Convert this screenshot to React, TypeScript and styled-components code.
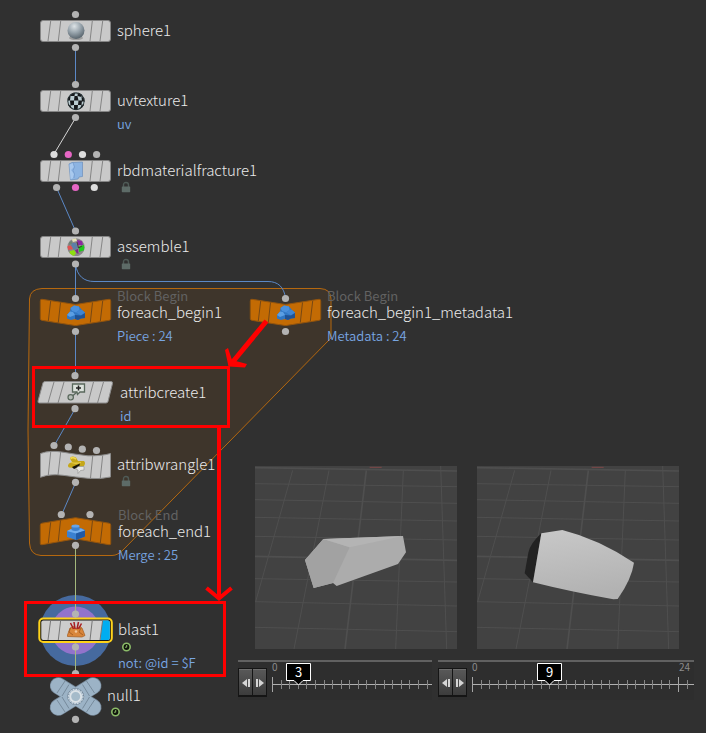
import React, { useState } from "react";
import styled, { createGlobalStyle } from "styled-components";

const GlobalStyle = createGlobalStyle`
  *, *::before, *::after { box-sizing: border-box; }
  body {
    margin: 0;
    background: #303030;
    color: #cccccc;
    font-family: "Noto Sans CJK SC", "Noto Sans", sans-serif;
  }
`;

const Page = styled.main`
  position: relative;
  min-height: 100vh;
  padding: 466px 12px 32px 238px;
  overflow: hidden;
  background: #303030;
`;

const Layer = styled.svg`
  position: absolute;
  top: 0;
  left: 0;
  width: 540px;
  height: 733px;
  pointer-events: none;
`;

const NodeItem = styled.article<{ $x: number; $y: number; $label: number }>`
  position: absolute;
  left: ${(p) => p.$x}px;
  top: ${(p) => p.$y}px;
  display: grid;
  grid-template-columns: ${(p) => p.$label}px auto;
  grid-template-rows: 14px 20px auto;
`;

const NodeArt = styled.svg`
  grid-area: 2 / 1;
  width: 80px;
  height: 20px;
  overflow: visible;
`;

const Hint = styled.span`
  grid-area: 1 / 2;
  font-size: 13px;
  line-height: 14px;
  color: #626262;
  white-space: nowrap;
`;

const Name = styled.h2`
  grid-area: 2 / 2;
  margin: 0;
  font-size: 15px;
  font-weight: 300;
  line-height: 18px;
  color: #ebebeb;
  white-space: nowrap;
`;

const Details = styled.div<{ $gap: number }>`
  grid-area: 3 / 2;
  display: flex;
  flex-direction: column;
  align-items: flex-start;
  padding-top: ${(p) => p.$gap}px;
`;

const Badge = styled.svg`
  display: block;
  width: 10px;
  height: 12px;
  margin-left: 4px;
  overflow: visible;
`;

const Note = styled.span`
  font-size: 13px;
  font-weight: 350;
  line-height: 20px;
  color: #78a6e2;
  white-space: nowrap;
`;

const Viewers = styled.section`
  position: relative;
  display: flex;
  flex-direction: column;
  gap: 11px;
`;

const PreviewRow = styled.div`
  display: grid;
  grid-template-columns: 1fr 1fr;
  gap: 20px;
  padding: 0 15px 0 17px;
`;

const Preview = styled.svg`
  display: block;
  width: 100%;
  height: 183px;
  background: #424242;
`;

const TimelineRow = styled.div`
  display: grid;
  grid-template-columns: 194fr 256fr;
  gap: 6px;
`;

const TimelineBar = styled.div`
  display: flex;
  align-items: flex-start;
  height: 40px;
  min-width: 0;
  border-top: 2px solid #616161;
  background: #2e2e2e;
`;

const Stepper = styled.div`
  display: flex;
  gap: 1px;
  margin-top: 6px;
  padding: 1px 1px 2px;
  background: #151515;
`;

const StepButton = styled.button`
  display: flex;
  align-items: center;
  justify-content: center;
  width: 13px;
  height: 26px;
  padding: 0;
  border: 0;
  border-top: 1px solid #6c6c6c;
  background: linear-gradient(#585858, #3c3c3c);
`;

const Track = styled.div`
  position: relative;
  flex: 1;
  height: 38px;
  min-width: 0;
`;

const Ruler = styled.svg`
  display: block;
  width: 100%;
  height: 38px;
  font-size: 10px;
  fill: #8c8c8c;
  overflow: visible;
`;

const Marker = styled.output`
  position: absolute;
  top: 1px;
  width: 25px;
  height: 23px;
  margin-left: -12px;
  font-size: 13px;
  line-height: 18px;
  text-align: center;
  color: #ffffff;
`;

const MarkerShape = styled.svg`
  position: absolute;
  inset: 0;
  width: 25px;
  height: 23px;
`;

const MarkerText = styled.span`
  position: relative;
`;

const Scrubber = styled.input`
  position: absolute;
  inset: 0;
  width: 100%;
  height: 100%;
  margin: 0;
  opacity: 0;
`;

type Port = [number, number, string?];
type Shape = "box" | "begin" | "end" | "slant" | "wave" | "active" | "null";
type IconName = "sphere" | "checker" | "glass" | "pieces" | "boulder" | "brick" | "create" | "wrangle" | "blast" | "none";

interface NodeData {
  name: string;
  x: number;
  y: number;
  label?: number;
  shape: Shape;
  icon: IconName;
  ports: Port[];
  hint?: string;
  badge?: "lock" | "clock";
  note?: string;
  gap?: number;
}

const PINK = "#e666c4";
const WHITE = "#dddddd";

const nodes: NodeData[] = [
  { name: "sphere1", x: 36, y: 7, shape: "box", icon: "sphere", ports: [[39.5, -6.5], [39.5, 26.5]] },
  { name: "uvtexture1", x: 36, y: 77, shape: "box", icon: "checker", ports: [[39.5, -6.5], [39.5, 26.5]], note: "uv", gap: 3 },
  {
    name: "rbdmaterialfracture1", x: 36, y: 147, shape: "box", icon: "glass", badge: "lock", gap: 0,
    ports: [[18, -6.5, WHITE], [32.3, -6.5, PINK], [46.5, -6.5, WHITE], [60.6, -6.5], [20.6, 26.5], [39.5, 26.5, PINK], [58.3, 26.5, WHITE]],
  },
  { name: "assemble1", x: 36, y: 223, shape: "box", icon: "pieces", badge: "lock", gap: 1, ports: [[39.5, -6], [39.5, 27]] },
  { name: "foreach_begin1", x: 36, y: 289, shape: "begin", icon: "boulder", hint: "Block Begin", note: "Piece : 24", gap: 3, ports: [[39.5, -4.5], [39.5, 28.5]] },
  { name: "foreach_begin1_metadata1", x: 246, y: 289, shape: "begin", icon: "boulder", hint: "Block Begin", note: "Metadata : 24", gap: 3, ports: [[39.5, -4.5], [39.5, 28.5]] },
  { name: "attribcreate1", x: 36, y: 369, label: 84, shape: "slant", icon: "create", note: "id", gap: 3, ports: [[39, -7.3], [39, 25.7]] },
  { name: "attribwrangle1", x: 36, y: 441, shape: "wave", icon: "wrangle", badge: "lock", gap: 0, ports: [[18, -9.5], [32.3, -8], [46.3, -5.8], [60.5, -4.5], [39.5, 27.3]] },
  { name: "foreach_end1", x: 36, y: 508, label: 82, shape: "end", icon: "brick", hint: "Block End", note: "Merge : 25", gap: 3, ports: [[25.3, -7.5], [54, -7.5], [39.5, 23.3]] },
  { name: "blast1", x: 36, y: 606, label: 82, shape: "active", icon: "blast", badge: "clock", note: "not: @id = $F", gap: 1, ports: [[39.5, -6], [39.5, 27]] },
  { name: "null1", x: 36, y: 672, label: 71, shape: "null", icon: "none", badge: "clock", gap: 0, ports: [[39.5, -12.5], [39.5, 33.3]] },
];

function Slices({ color }: { color: string }) {
  return <path d="M14.7 0L12 20M24.7 0L22.3 20M56.3 0L54 20M66.7 0L64 20" stroke={color} fill="none" />;
}

function Body({ shape }: { shape: Shape }) {
  switch (shape) {
    case "box":
      return (
        <g>
          <rect x="4.5" y="-.5" width="70" height="21" rx="2.5" fill="#c9c9c9" stroke="#858585" />
          <Slices color="#858585" />
        </g>
      );
    case "begin":
      return (
        <g>
          <path d="M6-3.7L39.5 1.5 73-3.7Q74.7-4 74.7-2V15.5Q74.7 17 73.3 17.3L39.5 22.6 5.7 17.3Q4.3 17 4.3 15.5V-2Q4.3-4 6-3.7Z" fill="#c36b04" stroke="#93540d" />
          <path d="M14.7-2L12.3 18M24.5-.5L22.3 19.5M56.5-.5L54.3 19.5M66.7-2L64.3 18" stroke="#774814" />
        </g>
      );
    case "end":
      return (
        <g transform="translate(0 -1)">
          <path d="M6 2.2L39.5-3.3 73 2.2Q74.7 2.5 74.7 4V22.5Q74.7 24 73 23.7L39.5 17.8 6 23.7Q4.3 24 4.3 22.5V4Q4.3 2.5 6 2.2Z" fill="#c36b04" stroke="#93540d" />
          <path d="M14.7 1.3L12.3 22M24.5-.5L22.3 20M56.5-.5L54.3 20M66.7 1.3L64.3 22" stroke="#774814" />
        </g>
      );
    case "slant":
      return (
        <g>
          <path d="M9.5-1.5H75Q77-1.5 76.5.5L72 18.5Q71.5 20 70 20H3.5Q1.5 20 2 18L7-.2Q7.5-1.5 9.5-1.5Z" fill="#c9c9c9" stroke="#8b8b8b" />
          <path d="M18-1L12 20M28-1L22 20M57.5-1L52 20M67.5-1L61.5 20" stroke="#858585" />
        </g>
      );
    case "wave":
      return (
        <g>
          <path d="M4.5-1.5Q14-5 27-2.8T52 .8Q66 1 74.5-1.5V22Q64 24.5 52 23.3T27 20.3Q14 18.5 4.5 22.3Z" fill="#c9c9c9" stroke="#8b8b8b" />
          <path d="M14.7-3L12.3 20M24.7-3L22 20M56.7 1L54.5 23M66.7.5L64.3 23" stroke="#858585" />
        </g>
      );
    case "active":
      return (
        <g>
          <rect x="3.3" y="-1.5" width="72.5" height="23.5" rx="4" fill="#151515" stroke="#ffd31a" strokeWidth="2" />
          <rect x="5.3" y=".5" width="68.5" height="19.5" rx="2" fill="#cdcdcd" />
          <path d="M66.5.5H72Q73.8.5 73.8 2.5V18Q73.8 20 72 20H64.2Z" fill="#00adf1" />
          <Slices color="#777777" />
        </g>
      );
    default:
      return (
        <g>
          <path d="M22.3-.2L57 21.3M57-.2L22.3 21.3" stroke="#738596" strokeWidth="17" strokeLinecap="round" />
          <path d="M22.3-.2L57 21.3M57-.2L22.3 21.3" stroke="#9cb3c6" strokeWidth="15.5" strokeLinecap="round" />
          <path d="M21 7L29-5M26 10L33-1.5M58.5 7L50.5-5M53.5 10L46.5-1.5M21 14L29 26M26 11L33 22.5M58.5 14L50.5 26M53.5 11L46.5 22.5" stroke="#778b9c" />
          <circle cx="39.7" cy="10.5" r="8" fill="#9cb3c6" stroke="#77899a" />
          <circle cx="39.7" cy="10.5" r="5.500" fill="#a5bbca" stroke="#dbe2e7" strokeWidth="2" />
          <circle cx="39.7" cy="10.5" r="7.200" fill="none" stroke="#d0dae2" strokeWidth="1.200" strokeDasharray="1.500 1.300" />
        </g>
      );
  }
}

function Icon({ name }: { name: IconName }) {
  switch (name) {
    case "sphere":
      return (
        <g>
          <ellipse cx="40" cy="17" rx="7" ry="2" fill="#8b8b8b" opacity=".7" />
          <circle cx="40" cy="9.5" r="8.5" fill="url(#sphereFill)" />
        </g>
      );
    case "checker":
      return (
        <g clipPath="url(#ballClip)">
          <rect x="31" y="1" width="18" height="18" fill="#b9cbd0" />
          <path
            d="M34 1Q38 0 39 2L38.5 5H34.5ZM42 1L46 3 45.5 6 41.5 5ZM31 6L34.5 5 34 9.5H31ZM38.5 5L41.5 5 42.5 9.5H38ZM45.5 6L49 7V10.5H46ZM34 9.5H38V14L34.5 14.5ZM42.5 9.5H46L45.5 14H42ZM30 13L34.5 14.5 36 19 32 18ZM38 14H42L41.5 19H38ZM45.5 14L49 13 47 18 44 18Z"
            fill="#15171a"
          />
          <circle cx="40" cy="10.2" r="8.6" fill="none" stroke="#273033" strokeWidth="1.8" />
        </g>
      );
    case "glass":
      return (
        <g>
          <path d="M33 3L36 1.5 46.5 1V15.500L43 16 42 18 34.500 19Z" fill="#8db4e2" stroke="#6c8fbd" strokeWidth=".7" />
          <path d="M37 2L38 6 35 9 38 13 37 17 34.500 18.500 33.500 3.500Z" fill="#a9c9ee" />
          <path d="M37 1.500L38.500 6M38.500 6L37 9.500 38.500 13 38 17" stroke="#7198cc" strokeWidth=".7" fill="none" />
        </g>
      );
    case "pieces":
      return (
        <g clipPath="url(#ballClip)">
          <rect x="31" y="1" width="18" height="18" fill="#8a8688" />
          <path d="M35 1L40 1 41 4 37 5Z" fill="#e5e2b8" />
          <path d="M41 3L46 4 47 8 42 8Z" fill="#8d28a0" />
          <path d="M36 6L40 6 42 11 38 13 35 9Z" fill="#5c7fa8" />
          <path d="M31 9L35 8.5 37 12 32 13Z" fill="#e25151" />
          <path d="M43 9.5L48 8 49 13 43 15Z" fill="#20c81c" />
          <path d="M34 14L38 13 40 16 38 19 33 18Z" fill="#8ddd0f" />
          <path d="M39 13L42 12 42.5 17 40.5 16Z" fill="#7c2a86" />
          <path d="M33 5L36 4 36 7 33 8Z" fill="#6d8476" />
          <path d="M41 5L42.5 11 46 9" stroke="#34262f" strokeWidth=".8" fill="none" />
        </g>
      );
    case "boulder":
      return (
        <g>
          <path d="M31 12L34 8.5 34.500 5 38 2.500 43 3.500 46 7 49 9.500V15L45 15.500 42 17 39 16 35 17 31 15.500Z" fill="#3077c4" />
          <path d="M34.500 5L38 2.500 43 3.500 43.500 7 40 9.500 36 8Z" fill="#4a90dc" />
          <path d="M31 12L34 8.500 37 9 39 12 34 14Z" fill="#5b9fe4" />
          <path d="M40 9.500L43.500 7 46 7 49 9.500 45 12.500Z" fill="#4085d2" />
          <path d="M39 12L45 12.500 49 10V15L45 15.500 42 17 39 16Z" fill="#1f5296" />
        </g>
      );
    case "brick":
      return (
        <g>
          <path d="M31 9L35 7.500 45 6 49 8V14.500L40 18 31 15Z" fill="#3a80d0" />
          <path d="M31 9L35 7 45 6.500 49 8.500 40 11.500Z" fill="#72aeee" />
          <path d="M40 11.500L49 8.500V14.500L40 18Z" fill="#2159a4" />
          <path d="M35.500 4Q39.500 2 43.500 4V8Q39.500 10 35.500 8Z" fill="#3d7fcb" />
          <ellipse cx="39.500" cy="4" rx="4" ry="1.600" fill="#65a4e9" />
        </g>
      );
    case "create":
      return (
        <g>
          <path d="M36.5 1H48.5V9H44L41.5 11.5 41 9H36.5Z" fill="#dce2dc" stroke="#59685c" strokeWidth="1.3" />
          <path d="M42.5 2.5V7.5M40 5H45" stroke="#222" strokeWidth="1.5" />
          <path d="M41 9L36.5 13" stroke="#59685c" strokeWidth="1.3" />
          <circle cx="34.7" cy="14.3" r="2.7" fill="#b5bcb6" stroke="#59685c" strokeWidth="1.2" />
        </g>
      );
    case "wrangle":
      return (
        <g>
          <path d="M34 3.500Q35 0 40 2.500L42 6 48 6Q50 8 48 11 45 13.500 39 13L33 12.500Q31 11 33 8.500L36 7Z" fill="#c5a719" />
          <path d="M34.500 3.500Q37 1.500 40 4" stroke="#efd651" strokeWidth="1.800" fill="none" />
          <path d="M35 7.500Q40 9 45 7.500" stroke="#e5cb48" strokeWidth="1.300" fill="none" />
          <path d="M36 12L44 8.500 43 12 38 14Z" fill="#171509" />
          <path d="M42 11.500H48V15L44.500 15.500 42 18.500V15L39.500 14Z" fill="#e8e8e5" stroke="#8f8f8d" strokeWidth=".6" />
        </g>
      );
    case "blast":
      return (
        <g>
          <path d="M31.5 15L34 8 38 6.5 40 9 44 6.5 46 8 49 15.500 46 17 31.500 16.500Z" fill="#d9863b" stroke="#a35b20" strokeWidth=".7" />
          <path d="M34.500 8L33 12 37 15M45 8L43 12 47 15" stroke="#9a5521" strokeWidth=".8" fill="none" />
          <path d="M37.500 9L34.500 3M39 9L38 2M41 9L42.500 2M42.500 9L45.500 3.500" stroke="#a81d23" strokeWidth="1.500" />
          <circle cx="40" cy="11.500" r="1.300" fill="#f2c69a" />
        </g>
      );
    default:
      return null;
  }
}

function StatusBadge({ kind }: { kind: "lock" | "clock" }) {
  return kind === "lock" ? (
    <Badge viewBox="0 0 10 12" role="img" aria-label="Locked">
      <path d="M2.500 6V4Q2.500 1.500 5 1.500T7.500 4V6" fill="none" stroke="#4f5b57" strokeWidth="1.400" />
      <rect x=".800" y="5.500" width="8.400" height="5.700" rx=".6" fill="#5d6b67" />
    </Badge>
  ) : (
    <Badge viewBox="0 0 10 12" role="img" aria-label="Time dependent">
      <circle cx="4.500" cy="6" r="3.700" fill="#10150c" stroke="#8cbc69" strokeWidth="1.600" />
      <path d="M4.700 4V6.200H3" fill="none" stroke="#8cbc69" />
    </Badge>
  );
}

function GraphNode({ node }: { node: NodeData }) {
  return (
    <NodeItem $x={node.x} $y={node.y} $label={node.label ?? 81}>
      <NodeArt viewBox="0 0 80 20" aria-hidden="true">
        <Body shape={node.shape} />
        <Icon name={node.icon} />
        {node.ports.map(([x, y, color], i) => (
          <circle key={i} cx={x} cy={y} r="3.6" fill={color ?? "#b3b3b3"} />
        ))}
      </NodeArt>
      {node.hint && <Hint>{node.hint}</Hint>}
      <Name>{node.name}</Name>
      <Details $gap={node.gap ?? 0}>
        {node.badge && <StatusBadge kind={node.badge} />}
        {node.note && <Note>{node.note}</Note>}
      </Details>
    </NodeItem>
  );
}

function FloorGrid() {
  return (
    <g fill="none" stroke="#4f4f4f" strokeWidth="3">
      <path d="M0 53L606 62M0 101L606 112M0 154L606 165M0 211L606 222M0 338L606 348M0 407L606 420M0 484L606 497" />
      <path d="M0 5L606 15M0 271L606 283" strokeWidth="5" />
      <path d="M113 13L2 407M222 13L117 549M445 13L422 549M557 0L575 549" />
      <path d="M334 13L270 549" strokeWidth="5" />
      <path d="M344 4H380" stroke="#7c4848" />
    </g>
  );
}

function StepIcon({ back = false }: { back?: boolean }) {
  return (
    <svg width="10" height="10" viewBox="0 0 10 10" aria-hidden="true">
      <g fill="#d5d5d5" transform={back ? undefined : "matrix(-1 0 0 1 10 0)"}>
        <path d="M1 5L6 1V9Z" />
        <rect x="7" y="1" width="2" height="8" />
      </g>
    </svg>
  );
}

const TICK = 206 / 24;

function Timeline({ start, lastTick, title }: { start: number; lastTick: number; title: string }) {
  const [frame, setFrame] = useState(start);
  return (
    <TimelineBar>
      <Stepper>
        <StepButton aria-label={`${title}: previous frame`} onClick={() => setFrame((f) => Math.max(0, f - 1))}>
          <StepIcon back />
        </StepButton>
        <StepButton aria-label={`${title}: next frame`} onClick={() => setFrame((f) => Math.min(lastTick, f + 1))}>
          <StepIcon />
        </StepButton>
      </Stepper>
      <Track>
        <Ruler>
          <text x="5" y="9">0</text>
          {lastTick >= 24 && <text x="212" y="9">24</text>}
          <line x1="5" y1="22.5" x2="100%" y2="22.5" stroke="#b0b0b0" />
          {Array.from({ length: lastTick + 1 }, (_, i) => {
            const x = Math.round(5 + i * TICK) + 0.5;
            const major = i % 24 === 0;
            return <path key={i} d={major ? `M${x} 15V30` : `M${x} 18V27`} stroke={major ? "#a5a5a5" : "#858585"} />;
          })}
        </Ruler>
        <Marker style={{ left: Math.round(5 + frame * TICK) }}>
          <MarkerShape viewBox="0 0 25 23" aria-hidden="true">
            <path d="M.5.5H24.5V17.5H17L12.5 22 8 17.5H.5Z" fill="#000" stroke="#fff" />
          </MarkerShape>
          <MarkerText>{frame}</MarkerText>
        </Marker>
        <Scrubber type="range" min={0} max={lastTick} value={frame} aria-label={title} onChange={(e) => setFrame(Number(e.target.value))} />
      </Track>
    </TimelineBar>
  );
}

export default function App() {
  return (
    <Page>
      <GlobalStyle />
      <Layer aria-hidden="true">
        <defs>
          <radialGradient id="sphereFill" cx=".4" cy=".25" r=".75">
            <stop offset="0" stopColor="#dde3e6" />
            <stop offset=".5" stopColor="#9aa6ae" />
            <stop offset="1" stopColor="#59656e" />
          </radialGradient>
          <clipPath id="ballClip">
            <ellipse cx="40" cy="10.2" rx="8.6" ry="9" />
          </clipPath>
        </defs>
        <path
          d="M42 288.5H320Q331 289 331 299V338L124 549Q118 555.5 112 555.5H41Q30 555 29.5 543L28 430 29.5 299Q30 289 42 288.5Z"
          fill="#3e352b"
          stroke="#b5680f"
        />
        <circle cx="75.5" cy="630.5" r="35.5" fill="#466a9f" />
        <circle cx="75.5" cy="630.5" r="24" fill="#9273cb" />
        <g fill="none" stroke="#5b88c6">
          <path d="M75.5 48V84M56.7 188L75.5 231M75.5 264V298M75.5 332V376M75 409L54 446M75.5 483L61.5 515" />
          <path d="M75.5 264C77 276 84 281.5 94 281.5H268C278 281.5 284 287 285.5 298" />
        </g>
        <path d="M75.5 118L54 154" stroke="#d6d6d6" />
        <path d="M75.5 545V673" stroke="#a3b87c" />
      </Layer>
      {nodes.map((node) => (
        <GraphNode key={node.name} node={node} />
      ))}
      <Layer aria-hidden="true">
        <g fill="none" stroke="#ff0000" strokeWidth="3">
          <rect x="33.5" y="367.5" width="195" height="59" />
          <rect x="25.5" y="602.5" width="199" height="73" />
        </g>
        <g fill="none" stroke="#ff0000" strokeWidth="4">
          <path d="M219 428V598M206.5 588L219 598.5 231.5 588" />
          <path d="M266.5 321L231 364" strokeWidth="5" />
        </g>
        <path d="M225 350L228 348 232 360 247 364 245 367.5 228.5 366.5Z" fill="#ff0000" />
      </Layer>
      <Viewers>
        <PreviewRow>
          <Preview viewBox="0 0 606 549" preserveAspectRatio="xMidYMid slice" role="img" aria-label="Fractured piece 3">
            <FloorGrid />
            <g transform="translate(-30 -33)">
              <path d="M235 252L474 243 483 292 459 327 275 393 264 384 206 399 180 315Z" fill="#acacac" />
              <path d="M235 252L314 277 264 384 206 399 180 315Z" fill="#a2a2a2" />
              <path d="M235 252L474 243 314 277Z" fill="#b4b4b4" />
            </g>
          </Preview>
          <Preview viewBox="0 0 606 549" preserveAspectRatio="xMidYMid slice" role="img" aria-label="Fractured piece 9">
            <defs>
              <linearGradient id="pieceFill" x1="0" y1="0" x2=".2" y2="1">
                <stop offset="0" stopColor="#c8c8c8" />
                <stop offset="1" stopColor="#b2b2b2" />
              </linearGradient>
            </defs>
            <FloorGrid />
            <g transform="translate(-36 -33)">
              <path d="M229 235Q196 265 190 293L179 355 204 382Z" fill="#222222" />
              <path d="M229 235L292 225Q400 252 507 323 500 372 458 432L445 433Q320 411 204 382Z" fill="url(#pieceFill)" />
            </g>
          </Preview>
        </PreviewRow>
        <TimelineRow>
          <Timeline start={3} lastTick={18} title="Frame, first viewer" />
          <Timeline start={9} lastTick={25} title="Frame, second viewer" />
        </TimelineRow>
      </Viewers>
    </Page>
  );
}
